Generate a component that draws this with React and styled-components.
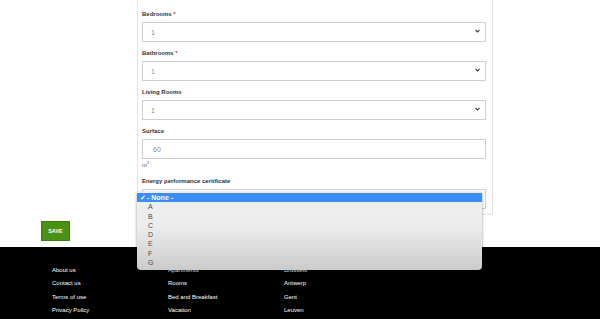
import React from "react";
import styled, { createGlobalStyle } from "styled-components";

const GlobalStyle = createGlobalStyle`
  html, body {
    margin: 0;
    padding: 0;
    background: #ffffff;
    font-family: "Liberation Sans", Arial, sans-serif;
  }
`;

const Page = styled.div`
  width: 600px;
  height: 319px;
  overflow: hidden;
  display: flex;
  flex-direction: column;
`;

const Main = styled.div`
  height: 247px;
  padding-left: 41px;
  box-sizing: border-box;
`;

const Card = styled.div`
  margin-left: 96px;
  width: 356px;
  box-sizing: border-box;
  border: 1px solid #e4e4e4;
  border-top: none;
  padding: 9px 6px 5px 4px;
`;

const Field = styled.div`
  position: relative;
  margin-bottom: ${(p) => (p.$last ? "0" : "6px")};
`;

const Label = styled.div`
  font-size: 6px;
  line-height: 10px;
  font-weight: 700;
  color: #333333;
  margin-bottom: 3px;

  & span {
    color: #e02424;
  }
`;

const Box = styled.div`
  height: 20px;
  box-sizing: border-box;
  border: 1px solid #cfcfcf;
  display: flex;
  align-items: center;
  justify-content: space-between;
  padding: 0 5px 0 ${(p) => (p.$input ? "10px" : "8px")};
  font-size: 7px;
  color: #8a8a8a;
  background: #ffffff;
`;

const Chevron = styled.svg`
  width: 5px;
  height: 4px;
  margin-top: -2px;
`;

const Unit = styled.div`
  height: 9px;
  font-size: 6px;
  line-height: 9px;
  color: #555555;
  margin: 2px 0 6px;

  & sup {
    font-size: 4px;
    line-height: 0;
    vertical-align: baseline;
    position: relative;
    top: -3px;
  }
`;

const Popup = styled.div`
  position: absolute;
  left: -5px;
  top: 16px;
  width: 345px;
  height: 78px;
  box-sizing: border-box;
  padding-top: 1px;
  background: linear-gradient(#efefef 0%, #ececec 45%, #cbcbcb 100%);
  border-radius: 0 0 4px 4px;
  box-shadow: 0 1px 3px rgba(0, 0, 0, 0.45);
  z-index: 5;
`;

const Option = styled.div`
  height: 9.3px;
  line-height: 9.3px;
  font-size: 7px;
  display: flex;
  align-items: center;
  padding-left: ${(p) => (p.$selected ? "3px" : "11px")};
  color: ${(p) => (p.$selected ? "#ffffff" : "#4a4a4a")};
  background: ${(p) => (p.$selected ? "#3b8ef7" : "transparent")};
  font-weight: ${(p) => (p.$selected ? 700 : 400)};

  & i {
    font-style: normal;
    width: 7px;
    font-size: 7px;
  }
`;

const SaveButton = styled.button`
  margin-top: 6px;
  width: 29px;
  height: 20px;
  background: #4a9114;
  border: 1px solid #3e7e10;
  color: #ffffff;
  font-family: "Liberation Sans", Arial, sans-serif;
  font-size: 5.5px;
  font-weight: 700;
  padding: 0;
  display: flex;
  align-items: center;
  justify-content: center;
`;

const Footer = styled.footer`
  flex: 1;
  background: #000000;
  display: grid;
  grid-template-columns: 116px 116px 116px;
  padding: 17px 0 0 52px;
`;

const Column = styled.div`
  display: flex;
  flex-direction: column;
`;

const FooterLink = styled.a`
  font-size: 6px;
  line-height: 13.3px;
  font-weight: 400;
  color: #ffffff;
  text-decoration: none;
`;

const chevron = (
  <Chevron viewBox="0 0 5 4">
    <path d="M0.5 1 L2.5 3 L4.5 1" fill="none" stroke="#444" strokeWidth="1.1" />
  </Chevron>
);

const options = ["A", "B", "C", "D", "E", "F", "G"];

const footerCols = [
  ["About us", "Contact us", "Terms of use", "Privacy Policy"],
  ["Apartments", "Rooms", "Bed and Breakfast", "Vacation"],
  ["Brussels", "Antwerp", "Gent", "Leuven"],
];

export default function App() {
  return (
    <Page>
      <GlobalStyle />
      <Main>
        <Card>
          <Field>
            <Label>
              Bedrooms <span>*</span>
            </Label>
            <Box>
              1{chevron}
            </Box>
          </Field>
          <Field>
            <Label>
              Bathrooms <span>*</span>
            </Label>
            <Box>
              1{chevron}
            </Box>
          </Field>
          <Field>
            <Label>Living Rooms</Label>
            <Box>
              1{chevron}
            </Box>
          </Field>
          <Field $last>
            <Label>Surface</Label>
            <Box $input>60</Box>
          </Field>
          <Unit>
            m<sup>2</sup>
          </Unit>
          <Field $last>
            <Label>Energy performance certificate</Label>
            <Box />
            <Popup>
              <Option $selected>
                <i>✓</i>- None -
              </Option>
              {options.map((o) => (
                <Option key={o}>{o}</Option>
              ))}
            </Popup>
          </Field>
        </Card>
        <SaveButton>SAVE</SaveButton>
      </Main>
      <Footer>
        {footerCols.map((col, i) => (
          <Column key={i}>
            {col.map((item) => (
              <FooterLink key={item} href="#">
                {item}
              </FooterLink>
            ))}
          </Column>
        ))}
      </Footer>
    </Page>
  );
}
